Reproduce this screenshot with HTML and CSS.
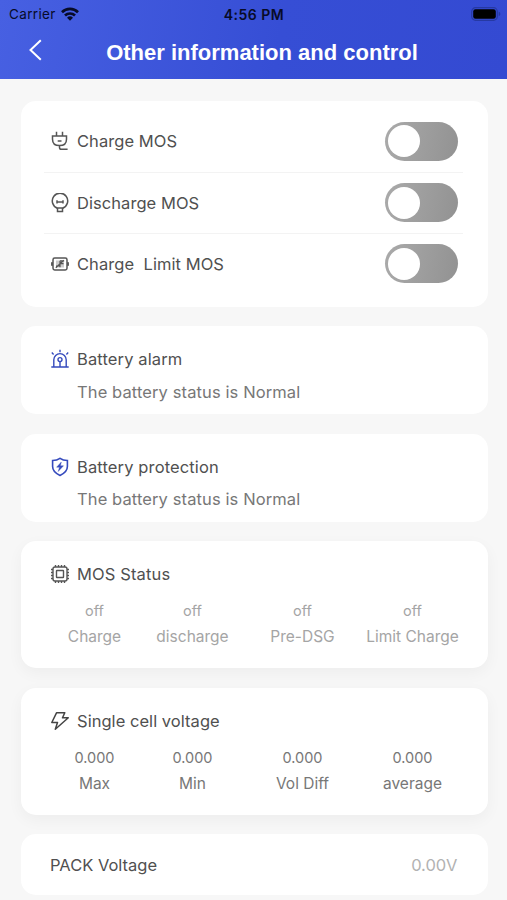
FILE: index.html
```html
<!DOCTYPE html>
<html lang="en">
<head>
<meta charset="utf-8">
<title>Other information and control</title>
<link rel="stylesheet" href="styles.css">
</head>
<body>
<header class="header">
  <div class="status">
    <div class="carrier">
      <span>Carrier</span>
      <svg class="wifi" viewBox="0 0 18 14"><g fill="none" stroke="#070b28" stroke-width="2.700"><path d="M1 5.200a11.500 11.500 0 0 1 16 0"/><path d="M4 8.500a7.200 7.200 0 0 1 10 0"/></g><path d="M6 10.800a4.300 4.300 0 0 1 6 0L9 13.800z" fill="#070b28"/></svg>
    </div>
    <span class="time">4:56 PM</span>
    <svg class="battery" viewBox="0 0 30 14"><rect x=".7" y=".7" width="25.600" height="12.600" rx="3.800" fill="none" stroke="#2639a3" stroke-width="1.200"/><rect x="2.200" y="2.200" width="22.600" height="9.600" rx="2.300" fill="#000"/><path d="M27.700 4.800v4.400q1.700-.6 1.700-2.200t-1.700-2.200" fill="#2639a3"/></svg>
  </div>
  <div class="nav">
    <svg class="back" viewBox="0 0 13 22"><path d="M11.800 1.200 1.500 11l10.300 9.800" fill="none" stroke="#fff" stroke-width="2"/></svg>
    <h1>Other information and control</h1>
  </div>
</header>
<main class="content">
  <section class="card switches">
    <div class="row">
      <svg class="icon" viewBox="0 0 18 20"><g fill="none" stroke="#555" stroke-width="1.500"><path d="M5.500 .8v4M11.500 .8v4M1.500 5h14v3.200c0 4-2.800 6.400-7 6.400s-7-2.400-7-6.400zM8.500 14.600v1.900q0 1.800 1.800 1.800h6.300M6.700 10h3.800"/></g></svg>
      <span>Charge MOS</span><i class="toggle"></i>
    </div>
    <div class="row">
      <svg class="icon" viewBox="0 0 18 20"><g fill="none" stroke="#555" stroke-width="1.500"><path d="M6.200 15a7.700 7.700 0 1 1 5.600 0"/><path d="M5.300 15.100h7.400M6.500 15.100v3.500h5v-3.500M6 7.300v3.200M12 7.300v3.200M6 8.900h6"/></g></svg>
      <span>Discharge MOS</span><i class="toggle"></i>
    </div>
    <div class="row">
      <svg class="icon" viewBox="0 0 18 20"><rect x="5" y="6.500" width="8" height="7" fill="#ccc"/><g fill="none" stroke="#555" stroke-width="1.500"><rect x="2" y="4" width="14" height="12" rx="1.700"/><path d="M0 10h2M16 10h2M1 8v4M17 8v4"/><path d="M4.800 13.700 12.800 6.300M9 6.800v6.400M9 6.800h4.200M9 9.700h3.500M5 12h4" stroke-width="1.200"/></g></svg>
      <span>Charge&nbsp; Limit MOS</span><i class="toggle"></i>
    </div>
  </section>
  <section class="card notice">
    <h2><svg class="icon" viewBox="0 0 18 20"><g fill="none" stroke="#354abd" stroke-width="1.400"><path d="M.3 18h17.400M2.800 18v-7.200a6.200 6.200 0 0 1 12.400 0V18M9 .8v2.500M.8 3.600l1.800 1.800M17.200 3.600l-1.800 1.800M9 12.600V18"/><circle cx="9" cy="10.600" r="2"/></g></svg><span>Battery alarm</span></h2>
    <p>The battery status is Normal</p>
  </section>
  <section class="card notice">
    <h2><svg class="icon" viewBox="0 0 18 20"><path d="M9 1.300q3 2.200 7.400 2.200v6.100c0 4.200-3.100 6.900-7.400 8.800-4.300-1.900-7.400-4.600-7.400-8.800V3.500Q6 3.500 9 1.300Z" fill="none" stroke="#354abd" stroke-width="1.600"/><path d="m10.300 5-4.700 5.200h2.900l-1.300 4.300 5.300-5.700H9.400z" fill="#354abd" stroke="#354abd" stroke-width=".4"/></svg><span>Battery protection</span></h2>
    <p>The battery status is Normal</p>
  </section>
  <section class="card stats muted">
    <h2><svg class="icon" viewBox="0 0 18 20"><g fill="none" stroke="#555" stroke-width="1.400"><rect x="2" y="3" width="14" height="14" rx="2"/><rect x="5.500" y="6.500" width="7" height="7" rx=".5"/><path d="M4.500 1v2M7.500 1v2M10.500 1v2M13.500 1v2M4.500 17v2M7.500 17v2M10.500 17v2M13.500 17v2M0 5.500h2M0 8.500h2M0 11.500h2M0 14.500h2M16 5.500h2M16 8.500h2M16 11.500h2M16 14.500h2"/></g></svg><span>MOS Status</span></h2>
    <div class="grid">
      <div><b>off</b><span>Charge</span></div>
      <div><b>off</b><span>discharge</span></div>
      <div><b>off</b><span>Pre-DSG</span></div>
      <div><b>off</b><span>Limit Charge</span></div>
    </div>
  </section>
  <section class="card stats cells">
    <h2><svg class="icon" viewBox="0 0 18 20"><path d="M5.500 1.800h8.300l-2.300 5h5.800L4.300 18.200l2.200-6.700H.8z" fill="none" stroke="#444" stroke-width="1.500" stroke-linejoin="round"/></svg><span>Single cell voltage</span></h2>
    <div class="grid">
      <div><b>0.000</b><span>Max</span></div>
      <div><b>0.000</b><span>Min</span></div>
      <div><b>0.000</b><span>Vol Diff</span></div>
      <div><b>0.000</b><span>average</span></div>
    </div>
  </section>
  <section class="card pack">
    <span>PACK Voltage</span><span class="value">0.00V</span>
  </section>
</main>
</body>
</html>
```
FILE: styles.css
```css
* { box-sizing: border-box; }
html { overflow: hidden; }
body {
  margin: 0;
  height: 900px;
  overflow: hidden;
  background: #f7f7f7;
  color: #505050;
  font-family: Inter, "Liberation Sans", sans-serif;
  font-size: 16.5px;
}
.header {
  height: 79px;
  background: linear-gradient(100deg, #4760e2 0%, #364ed5 55%, #344ad2 100%);
}
.status {
  display: grid;
  grid-template-columns: 1fr auto 1fr;
  align-items: center;
  height: 28px;
  padding: 0 6px 0 9px;
  color: #070b28;
  font-size: 13.5px;
}
.carrier { display: flex; align-items: center; gap: 5.5px; letter-spacing: .35px; }
.wifi { width: 18px; height: 14px; }
.time { margin-left: -2px; font-size: 14px; font-weight: 600; letter-spacing: .5px; }
.battery { width: 30px; height: 14px; justify-self: end; }
.nav {
  display: grid;
  grid-template-columns: 78px 1fr 61px;
  align-items: center;
  height: 46px;
}
.back { width: 13px; height: 22px; margin: -2px 0 0 28.5px; }
h1 {
  margin: 4px 0 0;
  color: #fff;
  font: bold 22px/28px "Liberation Sans", sans-serif;
  text-align: center;
  white-space: nowrap;
}
.content {
  display: flex;
  flex-direction: column;
  gap: 19.5px;
  padding: 22px 19.5px 0 20.5px;
}
.card { flex: none; border-radius: 15px; background: #fff; }
.icon { width: 18px; height: 20px; margin-right: 8.5px; flex: none; }
.switches { height: 205.5px; padding: 10.4px 24.5px 0 23.5px; }
.row { display: flex; align-items: center; height: 61.2px; padding: 0 5px 0 6.5px; border-bottom: 1px solid #f3f3f3; }
.row span { letter-spacing: .06px; }
.row:last-child { border: 0; height: 60.2px; }
.toggle {
  width: 73.5px;
  height: 39px;
  margin-left: auto;
  padding: 3.5px;
  border-radius: 20px;
  background: linear-gradient(100deg, #aaa, #929292);
}
.toggle::before { content: ""; display: block; width: 32px; height: 32px; border-radius: 50%; background: #fff; }
h2 { display: flex; align-items: center; height: 24px; margin: 0; font-size: 16.5px; font-weight: 400; letter-spacing: .13px; }
.cells h2 { letter-spacing: .04px; }
.notice { height: 88px; padding: 21px 30px 0; }
.notice p { margin: 9px 0 0 26.5px; line-height: 24px; color: #777; letter-spacing: .11px; }
.notice + .notice p { margin-top: 8.4px; }
.stats { height: 127px; padding: 21px 21px 0 30px; box-shadow: 0 5px 16px rgba(0, 0, 0, .045); }
.grid { display: grid; grid-template-columns: 88px 108px 112px 108px; margin-top: 12px; font-size: 15.5px; color: #777; text-align: center; }
.grid b, .grid span { display: block; font-weight: 400; line-height: 26px; }
.grid b { font-size: 14.5px; }
.muted .grid { color: #a5a5a5; }
.pack { display: flex; align-items: center; justify-content: space-between; height: 61px; padding: 0 30px 0 29.5px; }
.value { color: #b2b2b2; }
```
